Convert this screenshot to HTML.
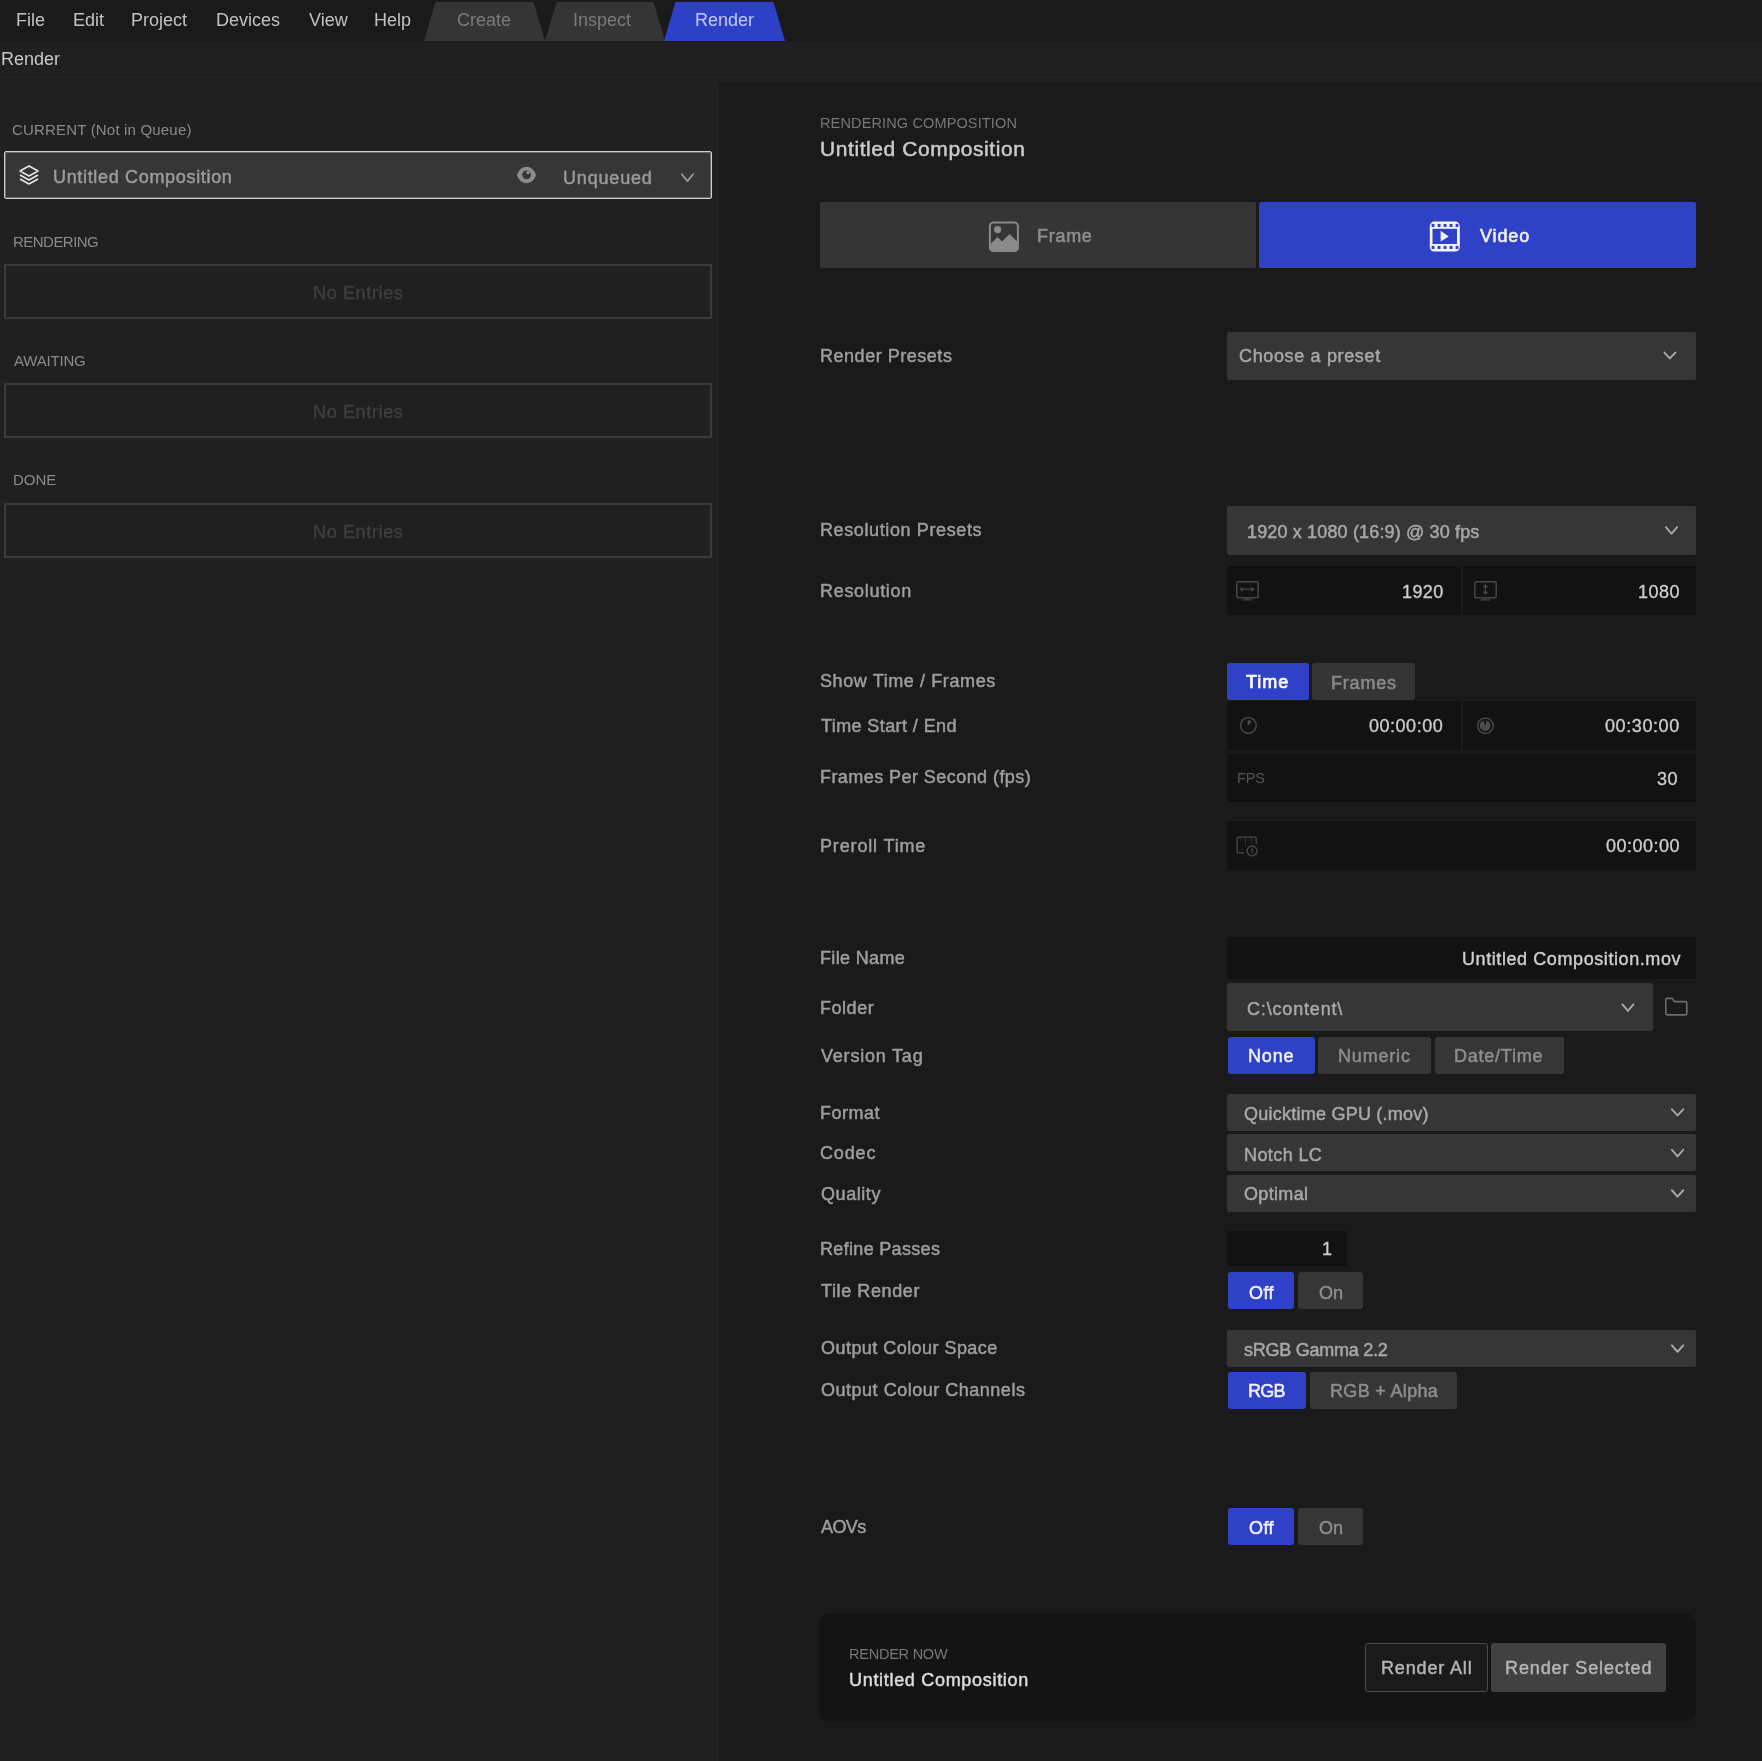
<!DOCTYPE html>
<html><head><meta charset="utf-8"><title>Render</title>
<style>
html,body{margin:0;padding:0;}
body{width:1762px;height:1761px;position:relative;overflow:hidden;background:#1a1a1a;font-family:"Liberation Sans", sans-serif;}
body>div,body>svg{position:absolute;}
.t{white-space:nowrap;will-change:transform;}
</style></head><body>
<div style="left:0px;top:0px;width:1762px;height:42px;background:#1a1a1a;"></div>
<div style="left:0px;top:42px;width:1762px;height:32px;background:#202020;"></div>
<div style="left:0px;top:74px;width:1762px;height:2px;background:#1d1d1d;"></div>
<div style="left:0px;top:76px;width:1762px;height:1685px;background:#202020;"></div>
<div style="left:719px;top:82px;width:1043px;height:1679px;background:#1a1a1a;"></div>
<div class="t" style="left:15.92px;top:11.15px;font-size:18px;line-height:18px;color:#c2c2c2;letter-spacing:0.000px;">File</div>
<div class="t" style="left:73.40px;top:11.15px;font-size:18px;line-height:18px;color:#c2c2c2;letter-spacing:0.000px;">Edit</div>
<div class="t" style="left:131.18px;top:11.15px;font-size:18px;line-height:18px;color:#c2c2c2;letter-spacing:0.000px;">Project</div>
<div class="t" style="left:216.40px;top:11.15px;font-size:18px;line-height:18px;color:#c2c2c2;letter-spacing:0.000px;">Devices</div>
<div class="t" style="left:309.26px;top:11.15px;font-size:18px;line-height:18px;color:#c2c2c2;letter-spacing:0.000px;">View</div>
<div class="t" style="left:373.66px;top:11.15px;font-size:18px;line-height:18px;color:#c2c2c2;letter-spacing:0.000px;">Help</div>
<svg style="left:424px;top:2px;" width="121" height="39" viewBox="0 0 121 39"><polygon points="0,39 11.5,0 109.5,0 121,39" fill="#353535"/></svg>
<svg style="left:545px;top:2px;" width="120" height="39" viewBox="0 0 120 39"><polygon points="0,39 11.5,0 108.5,0 120,39" fill="#353535"/></svg>
<svg style="left:664px;top:2px;" width="121" height="39" viewBox="0 0 121 39"><polygon points="0,39 11.5,0 109.5,0 121,39" fill="#2f40c8"/></svg>
<div class="t" style="left:457.44px;top:11.25px;font-size:18px;line-height:18px;color:#7a7a7a;letter-spacing:0.000px;">Create</div>
<div class="t" style="left:572.88px;top:11.25px;font-size:18px;line-height:18px;color:#7a7a7a;letter-spacing:0.000px;">Inspect</div>
<div class="t" style="left:695.20px;top:11.25px;font-size:18px;line-height:18px;color:#c3cbf8;letter-spacing:0.000px;">Render</div>
<div class="t" style="left:1.20px;top:50.05px;font-size:18px;line-height:18px;color:#c8c8c8;letter-spacing:0.000px;">Render</div>
<div class="t" style="left:12.30px;top:121.54px;font-size:15px;line-height:15px;color:#8a8a8a;letter-spacing:0.181px;">CURRENT (Not in Queue)</div>
<div style="left:4px;top:151px;width:708px;height:48px;background:#363636;box-sizing:border-box;border:1px solid #cfcfcf;box-shadow:inset 0 0 0 1px #6a6a6a;border-radius:2px;"></div>
<svg style="left:18px;top:164px;" width="22" height="22" viewBox="0 0 22 22"><g fill="none" stroke="#e6e6e6" stroke-width="1.6" stroke-linejoin="round"><path d="M11 2 L20 7 L11 12 L2 7 Z"/><path d="M2 11 L11 16 L20 11"/><path d="M2 15 L11 20 L20 15"/></g></svg>
<div class="t" style="left:52.96px;top:168.43px;font-size:18px;line-height:18px;color:#9c9c9c;letter-spacing:0.672px;-webkit-text-stroke:0.48px #9c9c9c;">Untitled Composition</div>
<svg style="left:516px;top:165px;" width="22" height="20" viewBox="0 0 22 20"><path d="M1 10 C 4.5 -1, 16.5 -1, 20 10 C 16.5 21, 4.5 21, 1 10 Z" fill="#8c8c8c"/><circle cx="10.5" cy="9.8" r="4.4" fill="#363636"/><circle cx="12" cy="7.6" r="1.7" fill="#8c8c8c"/></svg>
<div class="t" style="left:562.84px;top:168.91px;font-size:18px;line-height:18px;color:#9a9a9a;letter-spacing:0.826px;-webkit-text-stroke:0.48px #9a9a9a;">Unqueued</div>
<svg style="left:679px;top:171px;" width="18" height="15" viewBox="0 0 18 15"><path d="M2.85 3.25 L8.45 10.15 L14.05 3.25" fill="none" stroke="#9c9c9c" stroke-width="1.7" stroke-linecap="round" stroke-linejoin="round"/></svg>
<div class="t" style="left:12.84px;top:234.34px;font-size:15px;line-height:15px;color:#8a8a8a;letter-spacing:-0.527px;">RENDERING</div>
<div style="left:4px;top:264px;width:708px;height:55px;box-sizing:border-box;border:2px solid #3a3a3a;"></div>
<div class="t" style="left:313.20px;top:283.91px;font-size:18px;line-height:18px;color:#3f3f3f;letter-spacing:0.649px;-webkit-text-stroke:0.40px #3f3f3f;">No Entries</div>
<div class="t" style="left:13.80px;top:353.22px;font-size:15px;line-height:15px;color:#8a8a8a;letter-spacing:-0.193px;">AWAITING</div>
<div style="left:4px;top:383px;width:708px;height:55px;box-sizing:border-box;border:2px solid #3a3a3a;"></div>
<div class="t" style="left:313.20px;top:402.91px;font-size:18px;line-height:18px;color:#3f3f3f;letter-spacing:0.649px;-webkit-text-stroke:0.40px #3f3f3f;">No Entries</div>
<div class="t" style="left:12.84px;top:471.96px;font-size:15px;line-height:15px;color:#8a8a8a;letter-spacing:-0.037px;">DONE</div>
<div style="left:4px;top:503px;width:708px;height:55px;box-sizing:border-box;border:2px solid #3a3a3a;"></div>
<div class="t" style="left:313.20px;top:522.91px;font-size:18px;line-height:18px;color:#3f3f3f;letter-spacing:0.649px;-webkit-text-stroke:0.40px #3f3f3f;">No Entries</div>
<div class="t" style="left:819.96px;top:115.81px;font-size:14.5px;line-height:14.5px;color:#777777;letter-spacing:0.136px;">RENDERING COMPOSITION</div>
<div class="t" style="left:819.96px;top:137.66px;font-size:21px;line-height:21px;color:#cbcbcb;letter-spacing:0.585px;-webkit-text-stroke:0.48px #cbcbcb;">Untitled Composition</div>
<div style="left:820px;top:202px;width:436px;height:66px;background:#353535;border-radius:2px;"></div>
<div style="left:1259px;top:202px;width:437px;height:66px;background:#2f41c6;border-radius:2px;"></div>
<svg style="left:988px;top:221px;" width="32" height="32" viewBox="0 0 32 32"><rect x="1.9" y="1.6" width="28" height="28.5" rx="3.5" fill="none" stroke="#8a8a8a" stroke-width="2"/><path d="M2.5 23 L9.5 16 L14 20.6 L21.5 13 L29.2 20.6 L29.2 27 Q29.2 29.6 26.6 29.6 L5.1 29.6 Q2.5 29.6 2.5 27 Z" fill="#8a8a8a"/><circle cx="9.6" cy="8.6" r="3.6" fill="#8a8a8a"/></svg>
<div class="t" style="left:1037.02px;top:227.17px;font-size:18px;line-height:18px;color:#8e8e8e;letter-spacing:0.720px;-webkit-text-stroke:0.56px #8e8e8e;">Frame</div>
<svg style="left:1429px;top:221px;" width="31" height="31" viewBox="0 0 31 31"><rect x="0.8" y="0.6" width="30" height="30" rx="4.5" fill="#f4f4ff"/><rect x="3.5" y="7.8" width="24.5" height="15.2" fill="#2f41c6"/><rect x="2.6" y="2.9" width="2.9" height="3.1" fill="#2f41c6"/><rect x="2.6" y="24.9" width="2.9" height="3.1" fill="#2f41c6"/><rect x="8.6" y="2.9" width="2.9" height="3.1" fill="#2f41c6"/><rect x="8.6" y="24.9" width="2.9" height="3.1" fill="#2f41c6"/><rect x="14.6" y="2.9" width="2.9" height="3.1" fill="#2f41c6"/><rect x="14.6" y="24.9" width="2.9" height="3.1" fill="#2f41c6"/><rect x="20.6" y="2.9" width="2.9" height="3.1" fill="#2f41c6"/><rect x="20.6" y="24.9" width="2.9" height="3.1" fill="#2f41c6"/><rect x="26.6" y="2.9" width="2.9" height="3.1" fill="#2f41c6"/><rect x="26.6" y="24.9" width="2.9" height="3.1" fill="#2f41c6"/><path d="M11.6 9.8 L19.8 15.4 L11.6 20.6 Z" fill="#f4f4ff"/></svg>
<div class="t" style="left:1479.50px;top:227.17px;font-size:18px;line-height:18px;color:#f2f2ff;letter-spacing:0.875px;-webkit-text-stroke:0.56px #f2f2ff;">Video</div>
<div class="t" style="left:819.96px;top:346.91px;font-size:18px;line-height:18px;color:#9e9e9e;letter-spacing:0.525px;-webkit-text-stroke:0.48px #9e9e9e;">Render Presets</div>
<div style="left:1227px;top:332px;width:469px;height:47.5px;background:#363636;border-radius:2px;"></div>
<div class="t" style="left:1239.40px;top:347.45px;font-size:18px;line-height:18px;color:#a8a8a8;letter-spacing:0.648px;-webkit-text-stroke:0.48px #a8a8a8;">Choose a preset</div>
<div class="t" style="left:819.96px;top:521.21px;font-size:18px;line-height:18px;color:#9e9e9e;letter-spacing:0.613px;-webkit-text-stroke:0.48px #9e9e9e;">Resolution Presets</div>
<div style="left:1227px;top:506px;width:469px;height:49px;background:#363636;border-radius:2px;"></div>
<div class="t" style="left:1246.84px;top:522.89px;font-size:18px;line-height:18px;color:#a8a8a8;letter-spacing:0.152px;-webkit-text-stroke:0.48px #a8a8a8;">1920 x 1080 (16:9) @ 30 fps</div>
<div class="t" style="left:819.96px;top:581.67px;font-size:18px;line-height:18px;color:#9e9e9e;letter-spacing:0.688px;-webkit-text-stroke:0.48px #9e9e9e;">Resolution</div>
<div style="left:1227px;top:566px;width:234px;height:49px;background:#121212;"></div>
<div style="left:1463px;top:566px;width:233px;height:49px;background:#121212;"></div>
<svg style="left:1236.3px;top:581px;" width="23" height="20" viewBox="0 0 23 20"><rect x="0.8" y="0.8" width="21.4" height="16" rx="1.5" fill="none" stroke="#474747" stroke-width="1.5"/><path d="M11.2 17 L11.2 18.6" stroke="#474747" stroke-width="1.3"/><path d="M6.8 18.8 L15.8 18.8" stroke="#474747" stroke-width="1.3" stroke-linecap="round"/><path d="M5.5 8.2 L16.5 8.2" stroke="#474747" stroke-width="1.3"/><path d="M3.4 8.2 L6.6 5.4 L6.6 11 Z M18.6 8.2 L15.4 5.4 L15.4 11 Z" fill="#474747"/></svg>
<svg style="left:1473.5px;top:581px;" width="23" height="20" viewBox="0 0 23 20"><rect x="0.8" y="0.8" width="21.4" height="16" rx="1.5" fill="none" stroke="#474747" stroke-width="1.5"/><path d="M11.2 17 L11.2 18.6" stroke="#474747" stroke-width="1.3"/><path d="M6.8 18.8 L15.8 18.8" stroke="#474747" stroke-width="1.3" stroke-linecap="round"/><path d="M11.4 5 L11.4 12" stroke="#474747" stroke-width="1.3"/><path d="M11.4 3 L8.6 6.2 L14.2 6.2 Z M11.4 14 L8.6 10.8 L14.2 10.8 Z" fill="#474747"/></svg>
<div class="t" style="left:1401.84px;top:582.65px;font-size:18px;line-height:18px;color:#cecece;letter-spacing:0.397px;-webkit-text-stroke:0.32px #cecece;">1920</div>
<div class="t" style="left:1638.20px;top:582.65px;font-size:18px;line-height:18px;color:#cecece;letter-spacing:0.517px;-webkit-text-stroke:0.32px #cecece;">1080</div>
<div class="t" style="left:819.96px;top:672.21px;font-size:18px;line-height:18px;color:#9e9e9e;letter-spacing:0.600px;-webkit-text-stroke:0.48px #9e9e9e;">Show Time / Frames</div>
<div style="left:1227px;top:663px;width:82px;height:37px;background:#2f41c6;border-radius:3px;"></div>
<div style="left:1312px;top:663px;width:103px;height:37px;background:#353535;border-radius:3px;"></div>
<div class="t" style="left:1246.20px;top:673.15px;font-size:18px;line-height:18px;color:#ffffff;letter-spacing:0.983px;-webkit-text-stroke:0.72px #ffffff;">Time</div>
<div class="t" style="left:1330.84px;top:674.35px;font-size:18px;line-height:18px;color:#8a8a8a;letter-spacing:0.796px;-webkit-text-stroke:0.56px #8a8a8a;">Frames</div>
<div class="t" style="left:820.60px;top:717.17px;font-size:18px;line-height:18px;color:#9e9e9e;letter-spacing:0.407px;-webkit-text-stroke:0.48px #9e9e9e;">Time Start / End</div>
<div style="left:1227px;top:701px;width:234px;height:49px;background:#121212;"></div>
<div style="left:1463px;top:701px;width:233px;height:49px;background:#121212;"></div>
<svg style="left:1238px;top:715px;" width="21" height="21" viewBox="0 0 21 21"><circle cx="10.4" cy="10.4" r="7.8" fill="none" stroke="#474747" stroke-width="1.5"/><path d="M10.2 10.2 L10 5.2 L13.4 6.6 Z" fill="#4a4a4a" stroke="#4a4a4a" stroke-width="0.8" stroke-linejoin="round"/></svg>
<svg style="left:1475px;top:715px;" width="21" height="21" viewBox="0 0 21 21"><circle cx="10.4" cy="10.7" r="7.8" fill="none" stroke="#474747" stroke-width="1.5"/><path d="M10.4 10.7 L8.2 5.6 A5.4 5.4 0 1 0 11.4 5.4 Z" fill="#4c4c4c"/></svg>
<div class="t" style="left:1369.00px;top:717.09px;font-size:18px;line-height:18px;color:#cecece;letter-spacing:0.521px;-webkit-text-stroke:0.32px #cecece;">00:00:00</div>
<div class="t" style="left:1605.00px;top:716.65px;font-size:18px;line-height:18px;color:#cecece;letter-spacing:0.593px;-webkit-text-stroke:0.32px #cecece;">00:30:00</div>
<div class="t" style="left:819.96px;top:767.89px;font-size:18px;line-height:18px;color:#9e9e9e;letter-spacing:0.439px;-webkit-text-stroke:0.48px #9e9e9e;">Frames Per Second (fps)</div>
<div style="left:1227px;top:754px;width:469px;height:48px;background:#121212;"></div>
<div class="t" style="left:1236.66px;top:770.81px;font-size:14.5px;line-height:14.5px;color:#535353;letter-spacing:-0.160px;">FPS</div>
<div class="t" style="left:1657.40px;top:769.95px;font-size:18px;line-height:18px;color:#cecece;letter-spacing:0.600px;-webkit-text-stroke:0.32px #cecece;">30</div>
<div class="t" style="left:819.96px;top:837.11px;font-size:18px;line-height:18px;color:#9e9e9e;letter-spacing:0.850px;-webkit-text-stroke:0.48px #9e9e9e;">Preroll Time</div>
<div style="left:1227px;top:821px;width:469px;height:49px;background:#121212;"></div>
<svg style="left:1235px;top:835px;" width="26" height="22" viewBox="0 0 26 22"><path d="M9 17.8 L4 17.8 Q2.2 17.8 2.2 16 L2.2 4 Q2.2 2.2 4 2.2 L19.5 2.2 Q21.3 2.2 21.3 4 L21.3 9" fill="none" stroke="#404040" stroke-width="1.6"/><path d="M4.5 5 L21 5 M4.5 14.6 L8.5 14.6" stroke="#2e2e2e" stroke-width="1.2" stroke-dasharray="1.2 1"/><path d="M10.5 3 L10.5 12 M16.5 3 L16.5 9" stroke="#2a2a2a" stroke-width="1"/><circle cx="17" cy="15.9" r="5" fill="#121212" stroke="#404040" stroke-width="1.6"/><path d="M17.2 13 L17.2 17.4" stroke="#404040" stroke-width="1.5" stroke-linecap="round"/></svg>
<div class="t" style="left:1605.80px;top:836.65px;font-size:18px;line-height:18px;color:#cecece;letter-spacing:0.479px;-webkit-text-stroke:0.32px #cecece;">00:00:00</div>
<div class="t" style="left:819.96px;top:948.67px;font-size:18px;line-height:18px;color:#9e9e9e;letter-spacing:0.338px;-webkit-text-stroke:0.48px #9e9e9e;">File Name</div>
<div style="left:1227px;top:937px;width:469px;height:42px;background:#121212;"></div>
<div class="t" style="left:1461.66px;top:950.09px;font-size:18px;line-height:18px;color:#cecece;letter-spacing:0.583px;-webkit-text-stroke:0.40px #cecece;">Untitled Composition.mov</div>
<div class="t" style="left:819.96px;top:999.21px;font-size:18px;line-height:18px;color:#9e9e9e;letter-spacing:0.540px;-webkit-text-stroke:0.48px #9e9e9e;">Folder</div>
<div style="left:1227px;top:983px;width:426px;height:48px;background:#363636;border-radius:2px;"></div>
<div class="t" style="left:1246.66px;top:999.89px;font-size:18px;line-height:18px;color:#a8a8a8;letter-spacing:0.824px;-webkit-text-stroke:0.48px #a8a8a8;">C:\content\</div>
<svg style="left:1663px;top:996px;" width="26" height="21" viewBox="0 0 26 21"><path d="M2.8 17.6 L2.8 3.6 Q2.8 2.4 4 2.4 L8.4 2.4 Q9.2 2.4 9.8 3.2 L11.4 5.6 L22.6 5.6 Q23.8 5.6 23.8 6.8 L23.8 17.8 Q23.8 18.9 22.6 18.9 L4 18.9 Q2.8 18.9 2.8 17.6 Z" fill="none" stroke="#6c6c6c" stroke-width="1.6"/></svg>
<div class="t" style="left:820.60px;top:1047.45px;font-size:18px;line-height:18px;color:#9e9e9e;letter-spacing:0.795px;-webkit-text-stroke:0.48px #9e9e9e;">Version Tag</div>
<div style="left:1228px;top:1037px;width:87px;height:37px;background:#2f41c6;border-radius:3px;"></div>
<div style="left:1318px;top:1037px;width:113px;height:37px;background:#363636;border-radius:3px;"></div>
<div style="left:1435px;top:1037px;width:129px;height:37px;background:#363636;border-radius:3px;"></div>
<div class="t" style="left:1248.20px;top:1047.45px;font-size:18px;line-height:18px;color:#f4f4ff;letter-spacing:0.851px;-webkit-text-stroke:0.48px #f4f4ff;">None</div>
<div class="t" style="left:1338.02px;top:1047.45px;font-size:18px;line-height:18px;color:#8e8e8e;letter-spacing:0.817px;-webkit-text-stroke:0.48px #8e8e8e;">Numeric</div>
<div class="t" style="left:1454.48px;top:1047.45px;font-size:18px;line-height:18px;color:#8e8e8e;letter-spacing:0.759px;-webkit-text-stroke:0.48px #8e8e8e;">Date/Time</div>
<div class="t" style="left:819.96px;top:1104.17px;font-size:18px;line-height:18px;color:#9e9e9e;letter-spacing:0.480px;-webkit-text-stroke:0.48px #9e9e9e;">Format</div>
<div style="left:1227px;top:1094px;width:469px;height:37px;background:#363636;border-radius:2px;"></div>
<div class="t" style="left:1244.40px;top:1105.45px;font-size:18px;line-height:18px;color:#a8a8a8;letter-spacing:0.238px;-webkit-text-stroke:0.48px #a8a8a8;">Quicktime GPU (.mov)</div>
<div class="t" style="left:819.96px;top:1144.45px;font-size:18px;line-height:18px;color:#9e9e9e;letter-spacing:0.867px;-webkit-text-stroke:0.48px #9e9e9e;">Codec</div>
<div style="left:1227px;top:1134px;width:469px;height:37px;background:#363636;border-radius:2px;"></div>
<div class="t" style="left:1244.40px;top:1146.17px;font-size:18px;line-height:18px;color:#a8a8a8;letter-spacing:0.404px;-webkit-text-stroke:0.48px #a8a8a8;">Notch LC</div>
<div class="t" style="left:820.60px;top:1185.11px;font-size:18px;line-height:18px;color:#9e9e9e;letter-spacing:0.567px;-webkit-text-stroke:0.48px #9e9e9e;">Quality</div>
<div style="left:1227px;top:1175px;width:469px;height:37px;background:#363636;border-radius:2px;"></div>
<div class="t" style="left:1244.40px;top:1185.45px;font-size:18px;line-height:18px;color:#a8a8a8;letter-spacing:0.336px;-webkit-text-stroke:0.48px #a8a8a8;">Optimal</div>
<div class="t" style="left:819.96px;top:1240.43px;font-size:18px;line-height:18px;color:#9e9e9e;letter-spacing:0.321px;-webkit-text-stroke:0.48px #9e9e9e;">Refine Passes</div>
<div style="left:1227px;top:1231px;width:120px;height:35px;background:#121212;"></div>
<div class="t" style="left:1322.18px;top:1240.05px;font-size:18px;line-height:18px;color:#cecece;letter-spacing:0.000px;-webkit-text-stroke:0.32px #cecece;">1</div>
<div class="t" style="left:820.60px;top:1282.17px;font-size:18px;line-height:18px;color:#9e9e9e;letter-spacing:0.600px;-webkit-text-stroke:0.48px #9e9e9e;">Tile Render</div>
<div style="left:1228px;top:1272px;width:66px;height:37px;background:#2f41c6;border-radius:3px;"></div>
<div style="left:1298px;top:1272px;width:65px;height:37px;background:#363636;border-radius:3px;"></div>
<div class="t" style="left:1249.00px;top:1283.93px;font-size:18px;line-height:18px;color:#f4f4ff;letter-spacing:0.425px;-webkit-text-stroke:0.48px #f4f4ff;">Off</div>
<div class="t" style="left:1318.76px;top:1284.09px;font-size:18px;line-height:18px;color:#8e8e8e;letter-spacing:0.060px;-webkit-text-stroke:0.48px #8e8e8e;">On</div>
<div class="t" style="left:820.60px;top:1339.11px;font-size:18px;line-height:18px;color:#9e9e9e;letter-spacing:0.456px;-webkit-text-stroke:0.48px #9e9e9e;">Output Colour Space</div>
<div style="left:1227px;top:1330px;width:469px;height:37px;background:#363636;border-radius:2px;"></div>
<div class="t" style="left:1244.40px;top:1341.45px;font-size:18px;line-height:18px;color:#a8a8a8;letter-spacing:-0.258px;-webkit-text-stroke:0.48px #a8a8a8;">sRGB Gamma 2.2</div>
<div class="t" style="left:820.92px;top:1380.67px;font-size:18px;line-height:18px;color:#9e9e9e;letter-spacing:0.514px;-webkit-text-stroke:0.48px #9e9e9e;">Output Colour Channels</div>
<div style="left:1228px;top:1372px;width:78px;height:37px;background:#2f41c6;border-radius:3px;"></div>
<div style="left:1310px;top:1372px;width:147px;height:37px;background:#363636;border-radius:3px;"></div>
<div class="t" style="left:1248.20px;top:1382.45px;font-size:18px;line-height:18px;color:#f4f4ff;letter-spacing:-0.700px;-webkit-text-stroke:0.48px #f4f4ff;">RGB</div>
<div class="t" style="left:1330.40px;top:1382.45px;font-size:18px;line-height:18px;color:#8e8e8e;letter-spacing:0.328px;-webkit-text-stroke:0.48px #8e8e8e;">RGB + Alpha</div>
<div class="t" style="left:820.92px;top:1518.17px;font-size:18px;line-height:18px;color:#9e9e9e;letter-spacing:-0.587px;-webkit-text-stroke:0.48px #9e9e9e;">AOVs</div>
<div style="left:1228px;top:1508px;width:66px;height:37px;background:#2f41c6;border-radius:3px;"></div>
<div style="left:1298px;top:1508px;width:65px;height:37px;background:#363636;border-radius:3px;"></div>
<div class="t" style="left:1249.00px;top:1518.93px;font-size:18px;line-height:18px;color:#f4f4ff;letter-spacing:0.425px;-webkit-text-stroke:0.48px #f4f4ff;">Off</div>
<div class="t" style="left:1318.76px;top:1519.09px;font-size:18px;line-height:18px;color:#8e8e8e;letter-spacing:0.060px;-webkit-text-stroke:0.48px #8e8e8e;">On</div>
<div style="left:819px;top:1613px;width:877px;height:109px;background:#141414;border-radius:12px;"></div>
<div class="t" style="left:849.44px;top:1647.11px;font-size:14.5px;line-height:14.5px;color:#777777;letter-spacing:-0.233px;">RENDER NOW</div>
<div class="t" style="left:849.44px;top:1671.45px;font-size:18px;line-height:18px;color:#dcdcdc;letter-spacing:0.692px;-webkit-text-stroke:0.48px #dcdcdc;">Untitled Composition</div>
<div style="left:1365px;top:1643px;width:123px;height:49px;background:#1a1a1a;box-sizing:border-box;border:1.5px solid #4a4a4a;border-radius:3px;"></div>
<div style="left:1491px;top:1643px;width:175px;height:49px;background:#414141;border-radius:3px;"></div>
<div class="t" style="left:1381.02px;top:1659.45px;font-size:18px;line-height:18px;color:#b4b4b4;letter-spacing:0.850px;-webkit-text-stroke:0.48px #b4b4b4;">Render All</div>
<div class="t" style="left:1505.40px;top:1659.45px;font-size:18px;line-height:18px;color:#b4b4b4;letter-spacing:0.887px;-webkit-text-stroke:0.48px #b4b4b4;">Render Selected</div>
<svg style="left:1661px;top:349px;" width="19" height="14" viewBox="0 0 19 14"><path d="M3.45 3.55 L8.90 9.45 L14.35 3.55" fill="none" stroke="#aaaaaa" stroke-width="1.9" stroke-linecap="round" stroke-linejoin="round"/></svg>
<svg style="left:1662px;top:524px;" width="20" height="14" viewBox="0 0 20 14"><path d="M3.85 3.15 L9.45 9.75 L15.05 3.15" fill="none" stroke="#aaaaaa" stroke-width="1.9" stroke-linecap="round" stroke-linejoin="round"/></svg>
<svg style="left:1619px;top:1001px;" width="19" height="14" viewBox="0 0 19 14"><path d="M3.35 3.45 L8.90 9.95 L14.45 3.45" fill="none" stroke="#aaaaaa" stroke-width="1.9" stroke-linecap="round" stroke-linejoin="round"/></svg>
<svg style="left:1668px;top:1106px;" width="20" height="14" viewBox="0 0 20 14"><path d="M3.85 3.35 L9.55 9.45 L15.25 3.35" fill="none" stroke="#aaaaaa" stroke-width="1.9" stroke-linecap="round" stroke-linejoin="round"/></svg>
<svg style="left:1668px;top:1146px;" width="20" height="15" viewBox="0 0 20 15"><path d="M3.85 3.75 L9.55 10.35 L15.25 3.75" fill="none" stroke="#aaaaaa" stroke-width="1.9" stroke-linecap="round" stroke-linejoin="round"/></svg>
<svg style="left:1668px;top:1187px;" width="20" height="14" viewBox="0 0 20 14"><path d="M3.85 3.25 L9.55 9.65 L15.25 3.25" fill="none" stroke="#aaaaaa" stroke-width="1.9" stroke-linecap="round" stroke-linejoin="round"/></svg>
<svg style="left:1668px;top:1342px;" width="20" height="14" viewBox="0 0 20 14"><path d="M3.85 3.35 L9.55 9.75 L15.25 3.35" fill="none" stroke="#aaaaaa" stroke-width="1.9" stroke-linecap="round" stroke-linejoin="round"/></svg>
</body></html>
